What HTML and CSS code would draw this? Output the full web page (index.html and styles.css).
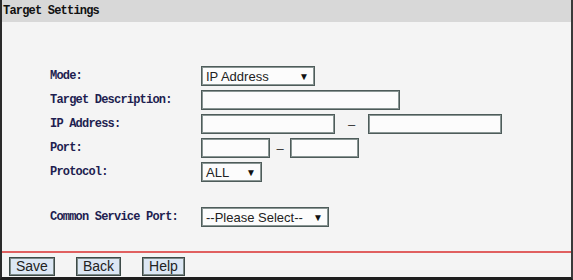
FILE: index.html
```html
<!DOCTYPE html>
<html lang="en">
<head>
    <meta charset="UTF-8">
    <title>Target Settings</title>
    <link rel="stylesheet" href="styles.css">
</head>
<body>
    <div class="panel">
        <div class="title">Target Settings</div>
        <div class="form">
            <div class="row">
                <label>Mode:</label>
                <div class="select mode"><span>IP Address</span><span class="arrow">&#9660;</span></div>
            </div>
            <div class="row">
                <label>Target Description:</label>
                <input type="text" class="desc">
            </div>
            <div class="row">
                <label>IP Address:</label>
                <input type="text" class="ip">
                <span class="dash wide">&ndash;</span>
                <input type="text" class="ip">
            </div>
            <div class="row">
                <label>Port:</label>
                <input type="text" class="port">
                <span class="dash">&ndash;</span>
                <input type="text" class="port">
            </div>
            <div class="row">
                <label>Protocol:</label>
                <div class="select proto"><span>ALL</span><span class="arrow">&#9660;</span></div>
            </div>
            <div class="row spaced">
                <label>Common Service Port:</label>
                <div class="select service"><span>--Please Select--</span><span class="arrow">&#9660;</span></div>
            </div>
        </div>
        <div class="footer">
            <button>Save</button>
            <button>Back</button>
            <button>Help</button>
        </div>
    </div>
</body>
</html>
```

FILE: styles.css
```css
html, body {
    margin: 0;
    padding: 0;
    background: #f4f4f4;
}
.panel {
    width: 573px;
    height: 280px;
    box-sizing: border-box;
    border-left: 2px solid #2a2a2a;
    border-right: 2px solid #3a3a3a;
    border-bottom: 3px solid #1e1e1e;
    background: #f4f4f4;
    display: flex;
    flex-direction: column;
}
.title {
    flex: none;
    height: 22px;
    line-height: 23px;
    background: #d8d8d8;
    padding-left: 1px;
    font-family: "Liberation Mono", monospace;
    font-size: 12px;
    letter-spacing: -0.8px;
    font-weight: bold;
    color: #111;
}
.form {
    flex: none;
    padding: 42px 0 0 48px;
    height: 231px;
    box-sizing: border-box;
    border-bottom: 2px solid #e06060;
}
.row {
    display: flex;
    align-items: center;
    height: 24px;
}
.row.spaced {
    margin-top: 21px;
}
.row label {
    width: 151px;
    font-family: "Liberation Mono", monospace;
    font-size: 12px;
    letter-spacing: -0.8px;
    font-weight: bold;
    color: #1e1e50;
}
input, .select {
    box-sizing: border-box;
    height: 20px;
    border: 1px solid #4e5c5a;
    box-shadow: inset 0 0 0 1px #8a9694;
    background: #fcfcfc;
    margin: 0;
    padding: 0;
}
.desc { width: 199px; }
.ip { width: 134px; }
.port { width: 69px; }
.dash {
    width: 20px;
    text-align: center;
    font-family: "Liberation Sans", Arial, sans-serif;
    font-size: 13px;
    color: #333;
}
.dash.wide { width: 33px; }
.select {
    display: flex;
    align-items: center;
    justify-content: space-between;
    padding: 0 5px 0 4px;
    font-family: "Liberation Sans", Arial, sans-serif;
    font-size: 13px;
    color: #222;
}
.select .arrow {
    font-size: 10px;
    color: #111;
}
.mode { width: 114px; }
.proto { width: 61px; }
.service { width: 128px; }
.footer {
    display: flex;
    gap: 21px;
    padding: 4px 0 0 7px;
}
.footer button {
    height: 19px;
    padding: 0 6px;
    border: 1px solid #3d4a48;
    box-shadow: inset 0 0 0 1px #7d8a88;
    background: #dce7f4;
    font-family: "Liberation Sans", Arial, sans-serif;
    font-size: 14px;
    line-height: 17px;
    color: #222;
}
```
